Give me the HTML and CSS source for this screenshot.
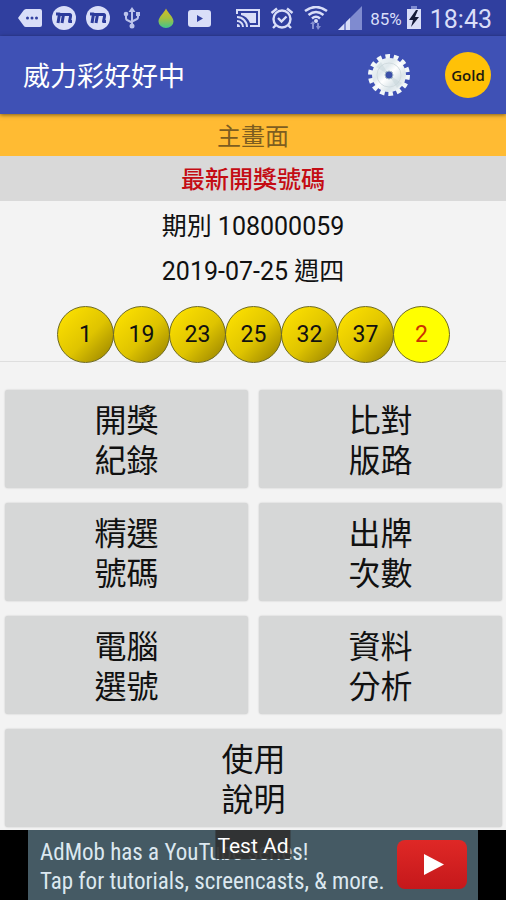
FILE: index.html
```html
<!DOCTYPE html>
<html lang="zh-Hant">
<head>
<meta charset="utf-8">
<meta name="viewport" content="width=device-width, initial-scale=1">
<title>威力彩好好中</title>
<link rel="stylesheet" href="styles.css">
</head>
<body>
<div class="status">
  <div class="icons">
    <svg viewBox="0 0 24 24"><path fill="#d9def8" d="M8 3h14q2 0 2 2v14q0 2-2 2H8q-1.500 0-2.500-1.500L0 12l5.500-7.500Q6.500 3 8 3z"/><g fill="#3240a0"><circle cx="9.500" cy="12" r="1.500"/><circle cx="14" cy="12" r="1.500"/><circle cx="18.500" cy="12" r="1.500"/></g></svg>
    <svg viewBox="0 0 24 24"><circle cx="12" cy="12" r="12" fill="#d9def8"/><path fill="none" stroke="#2c3c9c" stroke-width="3" stroke-linejoin="round" d="M4 8h3.500L6 17M7 8.500h4.500L10 17M11 8.500h6.500q1.500 0 1 2L17.500 15.500H20"/></svg>
    <svg viewBox="0 0 24 24"><circle cx="12" cy="12" r="12" fill="#d9def8"/><path fill="none" stroke="#2c3c9c" stroke-width="3" stroke-linejoin="round" d="M4 8h3.500L6 17M7 8.500h4.500L10 17M11 8.500h6.500q1.500 0 1 2L17.500 15.500H20"/></svg>
    <svg viewBox="0 0 24 24"><g fill="none" stroke="#bcc4ec" stroke-width="2"><path d="M12 5v14M6 9v3q0 2 2 2.500l4 2M18 8v3q0 2-2 2.500l-4 2"/></g><g fill="#bcc4ec"><path d="M12 1l3.500 5h-7zM16 6h4v4h-4z"/><circle cx="6" cy="8" r="2.300"/><circle cx="12" cy="20" r="2.500"/></g></svg>
    <svg viewBox="0 0 24 24"><defs><linearGradient id="drop" x2="0" y2="1"><stop offset="0" stop-color="#d5bd27"/><stop offset=".5" stop-color="#a4c13f"/><stop offset="1" stop-color="#40c58d"/></linearGradient></defs><path fill="url(#drop)" d="M12 2.500C10 7 4.500 11 4.500 15.500a7.500 6.500 0 0 0 15 0C19.500 11 14 7 12 2.500z"/></svg>
    <svg viewBox="0 0 24 24"><rect y="4" width="23" height="17" rx="3" fill="#d9def8"/><path fill="#3240a0" d="M9 9l6 3.500L9 16z"/></svg>
  </div>
  <div class="icons">
    <svg viewBox="0 0 24 24"><g fill="none" stroke="#d9def8" stroke-width="2"><path d="M1 8V4h22v16h-9M1 11a10 10 0 0 1 10 10M1 15a6 6 0 0 1 6 6"/></g><path fill="#d9def8" d="M1 18a3 3 0 0 1 3 3H1zM5 7h15v10h-6Q11 10 5 9z"/></svg>
    <svg viewBox="0 0 24 24"><g fill="none" stroke="#d9def8" stroke-width="2.400"><circle cx="12" cy="13" r="8.500"/><path d="M8 12l3.500 3.500 5-5M1.500 7L7 2.500M22.500 7L17 2.500M6 19l-3 3M18 19l3 3"/></g></svg>
    <svg viewBox="0 0 24 24"><g fill="none" stroke="#d9def8" stroke-width="2.500"><path d="M1 5q11-8 22 0M4.500 9q7.500-6 15 0M8 12.500q4-3.500 8 0"/></g><circle cx="12" cy="15" r="2" fill="#d9def8"/><path fill="#8590d2" d="M8 23v-5H6l3-3 2 3h-1v5zM13 17h2v3h2l-3 4-2-4h1z"/></svg>
    <svg viewBox="0 0 24 24"><path fill="#7f8bd0" d="M24 0v24H0z"/><path fill="#d9def8" d="M12 12v12H8v-8zM6 18v6H0z"/></svg>
    <span class="percent">85%</span>
    <svg class="battery" viewBox="0 0 16 24"><path fill="#7f8bd0" d="M5 0h6v3H5z"/><path fill="#d9def8" d="M1 3h14v20H1z"/><path fill="#141a38" d="M10 4L3 14h4l-2 7 8-10H9l3-7z"/></svg>
    <span class="clock">18:43</span>
  </div>
</div>
<header class="toolbar">
  <h1>威力彩好好中</h1>
  <button class="tool" aria-label="設定">
    <svg class="gear" viewBox="0 0 44 44"><defs><linearGradient id="metal" x2="1" y2="1"><stop offset="0" stop-color="#f8fcfd"/><stop offset=".35" stop-color="#e0e9ed"/><stop offset=".5" stop-color="#fff"/><stop offset=".7" stop-color="#dbe5e9"/><stop offset="1" stop-color="#fff"/></linearGradient></defs><circle cx="22" cy="22" r="18.500" fill="none" stroke="#f2f7f9" stroke-width="5" stroke-dasharray="4.600 3.703"/><circle cx="22" cy="22" r="17" fill="url(#metal)"/><circle cx="22" cy="22" r="12" fill="none" stroke="#d2dce0"/><path fill="#c4d2d8" opacity=".45" d="M22 22L9 14l5-5zM22 22l13 8-5 5z"/><circle cx="22" cy="22" r="4" fill="#3c50a8" stroke="#a8bbc8"/></svg>
  </button>
  <button class="tool gold">Gold</button>
</header>
<main>
  <h2 class="screen-title">主畫面</h2>
  <h3 class="latest">最新開獎號碼</h3>
  <section class="draw">
    <p>期別 108000059</p>
    <p>2019-07-25 週四</p>
    <ul class="balls">
      <li>1</li><li>19</li><li>23</li><li>25</li><li>32</li><li>37</li><li class="special">2</li>
    </ul>
  </section>
  <nav class="menu">
    <button>開獎<br>紀錄</button>
    <button>比對<br>版路</button>
    <button>精選<br>號碼</button>
    <button>出牌<br>次數</button>
    <button>電腦<br>選號</button>
    <button>資料<br>分析</button>
    <button class="wide">使用<br>說明</button>
  </nav>
</main>
<footer class="ad">
  <a class="banner" href="#">
    <span class="copy">AdMob has a YouTube series!<br>Tap for tutorials, screencasts, &amp; more.</span>
    <svg class="play" viewBox="0 0 70 50"><defs><linearGradient id="red" x2="0" y2="1"><stop offset="0" stop-color="#df2826"/><stop offset="1" stop-color="#c5181b"/></linearGradient></defs><rect width="70" height="49" rx="8" fill="url(#red)"/><path fill="#fff" d="M27 14l20 10.500L27 35z"/></svg>
  </a>
  <span class="test">Test Ad</span>
</footer>
</body>
</html>
```
FILE: styles.css
```css
* { box-sizing: border-box; }
body {
  margin: 0;
  min-height: 100vh;
  display: flex;
  flex-direction: column;
  background: #f3f3f3;
  color: #111;
  font-family: Roboto, "Noto Sans CJK TC", sans-serif;
}
h1, h2, h3, p, ul { margin: 0; padding: 0; font-weight: 400; }
button { font: inherit; color: inherit; border: 0; padding: 0; cursor: pointer; }

.status {
  display: flex;
  justify-content: space-between;
  align-items: center;
  height: 36px;
  padding: 0 14px 0 18px;
  background: #303f9f;
  color: #d9def8;
}
.icons { display: flex; align-items: center; gap: 10px; }
.icons svg { width: 24px; height: 24px; }
.icons .battery { width: 16px; margin-left: -6px; }
.percent { font-size: 17px; line-height: 24px; margin-left: -2px; padding-top: 2px; }
.clock { font-size: 25px; line-height: 32px; margin-left: -2px; padding-top: 4px; }

.toolbar {
  position: relative;
  display: flex;
  align-items: center;
  height: 78px;
  padding: 0 15px 0 23px;
  background: #3f51b5;
  color: #fff;
  box-shadow: 0 1px 4px rgba(0, 0, 0, .5);
}
.toolbar h1 { flex: 1; padding-top: 4px; font-size: 27px; line-height: 40px; }
.tool { width: 46px; height: 46px; background: none; }
.gear { display: block; width: 44px; height: 44px; }
.gold {
  margin-left: 32px;
  border-radius: 50%;
  background: #ffc107;
  color: #1c1a10;
  font: 600 15px "Open Sans", sans-serif;
}

.screen-title, .latest { padding-top: 4px; text-align: center; font-size: 24px; }
.screen-title { line-height: 38px; background: #ffbb33; color: #7d5d20; }
.latest { line-height: 41px; background: #d9d9d9; color: #c40c14; font-weight: 500; }
.draw {
  padding-top: 3px;
  border-bottom: 1px solid #dedede;
  text-align: center;
  font-size: 25px;
  line-height: 45px;
}
.balls { display: flex; justify-content: center; list-style: none; margin: 12px 0 -2px; }
.balls li {
  position: relative;
  width: 57px;
  height: 57px;
  margin-right: -1px;
  border: 1px solid #6e6a20;
  border-radius: 50%;
  background: linear-gradient(135deg, #f8dc00 15%, #dfc400 55%, #a48e00 90%);
  font-size: 23px;
  line-height: 56px;
}
.balls .special { background: #ffff00; color: #cc3300; }

.menu {
  display: grid;
  grid-template-columns: 1fr 1fr;
  gap: 15px 11px;
  padding: 28px 4px 3px 5px;
}
.menu button {
  padding: 11px 0 7px;
  border-radius: 3px;
  background: #d6d7d7;
  box-shadow: 0 0 2px rgba(0, 0, 0, .2);
  font-size: 32px;
  line-height: 40px;
}
.menu .wide { grid-column: 1 / -1; }

.ad {
  position: relative;
  display: flex;
  margin-top: auto;
  padding: 0 28px;
  height: 70px;
  background: #000;
}
.banner {
  flex: 1;
  display: flex;
  align-items: center;
  justify-content: space-between;
  padding: 0 11px 0 12px;
  background: #455a64;
  color: #dce8f0;
  text-decoration: none;
}
.copy {
  padding-top: 3px;
  font-family: "Roboto Condensed", Roboto, sans-serif;
  font-size: 23px;
  line-height: 29px;
  white-space: nowrap;
}
.play { width: 70px; height: 50px; }
.test {
  position: absolute;
  top: 0;
  left: 50%;
  transform: translateX(-50%);
  padding: 3px 2px 0;
  background: rgba(48, 48, 48, .92);
  color: #fff;
  font-size: 21px;
  line-height: 26px;
}
```
